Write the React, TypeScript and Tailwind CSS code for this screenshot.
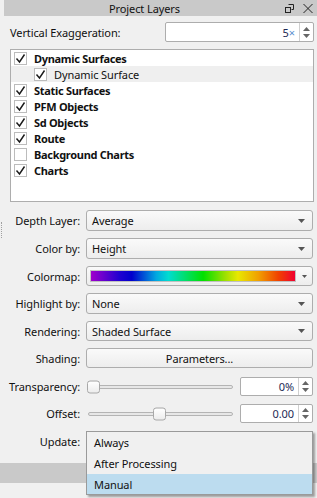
import type { ReactNode } from "react";

const LAYERS = [
  { label: "Dynamic Surfaces", checked: true, level: 0 },
  { label: "Dynamic Surface", checked: true, level: 1 },
  { label: "Static Surfaces", checked: true, level: 0 },
  { label: "PFM Objects", checked: true, level: 0 },
  { label: "Sd Objects", checked: true, level: 0 },
  { label: "Route", checked: true, level: 0 },
  { label: "Background Charts", checked: false, level: 0 },
  { label: "Charts", checked: true, level: 0 },
];

function DownArrow({ small }: { small?: boolean }) {
  return small ? (
    <svg width="5" height="3" viewBox="0 0 5 3">
      <path d="M0 0h5L2.5 3z" fill="#555" />
    </svg>
  ) : (
    <svg width="7" height="4" viewBox="0 0 7 4">
      <path d="M0 0h7L3.5 4z" fill="#555" />
    </svg>
  );
}

function CheckBox({ checked }: { checked: boolean }) {
  return (
    <div className="flex h-[13px] w-[13px] shrink-0 items-center justify-center border border-[#bcbcbc] bg-white">
      {checked && (
        <svg width="11" height="11" viewBox="0 0 11 11">
          <path d="M1.5 5.5L4.5 9L9.5 1.5" fill="none" stroke="#1a1a1a" strokeWidth="1.4" />
        </svg>
      )}
    </div>
  );
}

function Combo({ value }: { value: string }) {
  return (
    <div className="flex h-full flex-1 items-center justify-between rounded-[3px] border border-[#adadad] bg-[linear-gradient(#fafafa,#ededed)] pl-[5px] pr-[7px]">
      <span>{value}</span>
      <DownArrow />
    </div>
  );
}

function Spin({ value, suffix }: { value: string; suffix?: string }) {
  return (
    <div className="flex h-full items-stretch rounded-[2px] border border-[#adadad] bg-white">
      <div className="flex flex-1 items-center justify-end pr-[4px] text-[#1d2a55]">
        {value}
        {suffix && <span className="text-[#5b8fd0]">{suffix}</span>}
      </div>
      <div className="flex w-[14px] flex-col items-center justify-center gap-[3px] border-l border-[#d0d0d0]">
        <svg width="7" height="4" viewBox="0 0 7 4">
          <path d="M0 4h7L3.5 0z" fill="#666" />
        </svg>
        <svg width="7" height="4" viewBox="0 0 7 4">
          <path d="M0 0h7L3.5 4z" fill="#666" />
        </svg>
      </div>
    </div>
  );
}

function Slider({ pos }: { pos: number }) {
  return (
    <div className="relative h-full flex-1">
      <div className="absolute left-[2px] right-0 top-1/2 h-[4px] -translate-y-1/2 rounded-[2px] border border-[#b4b4b4] bg-[#e7e7e7]" />
      <div
        className="absolute top-1/2 h-[13px] w-[13px] -translate-y-1/2 rounded-[3px] border border-[#a8a8a8] bg-[linear-gradient(#ffffff,#ececec)]"
        style={{ left: `calc(${pos} * (100% - 15px) + 1px)` }}
      />
    </div>
  );
}

function Row({
  label,
  h,
  mt,
  children,
  grip,
}: {
  label: string;
  h: string;
  mt: string;
  children: ReactNode;
  grip?: boolean;
}) {
  return (
    <div className={`flex items-center ${h} ${mt}`}>
      <div className="relative flex h-full w-[80px] shrink-0 items-center justify-end">
        {grip && (
          <div className="absolute left-[1px] top-[12px] h-[16px] border-l border-dotted border-[#a0a0a0]" />
        )}
        {label}
      </div>
      <div className="ml-[6px] flex h-full flex-1 items-center gap-[7px]">{children}</div>
    </div>
  );
}

export default function App() {
  return (
    <div className="h-[498px] w-[317px] overflow-hidden bg-[#f0f0f0] font-['Noto_Sans',sans-serif] text-[11px] leading-none tracking-[-0.1px] text-[#111]">
      <div className="ml-[4px] flex h-[16px] items-center bg-[#c9c9c9]">
        <div className="flex-1 text-center">Project Layers</div>
        <div className="flex items-center gap-[9px] pr-[4px]">
          <svg width="9" height="9" viewBox="0 0 9 9">
            <path d="M3.5 0.5h5v5h-2" fill="none" stroke="#222" />
            <rect x="0.5" y="3.5" width="5" height="5" fill="none" stroke="#222" />
          </svg>
          <svg width="10" height="9" viewBox="0 0 10 9">
            <path d="M0.5 0L9.5 9M9.5 0L0.5 9" stroke="#222" strokeWidth="1" />
          </svg>
        </div>
      </div>

      <div className="mt-[6px] flex h-[20px] items-center pl-[10px] pr-[3px]">
        <span className="flex-1">Vertical Exaggeration:</span>
        <div className="h-full w-[149px]">
          <Spin value="5" suffix="×" />
        </div>
      </div>

      <div className="ml-[10px] mr-[3px] mt-[7px] h-[153px] border border-[#adadad] bg-white">
        {LAYERS.map((l) => (
          <div
            key={l.label}
            className={`flex h-[16px] items-center ${l.level === 1 ? "bg-[#efefef] pl-[23px]" : "pl-[3px] font-bold tracking-[-0.3px]"}`}
          >
            <CheckBox checked={l.checked} />
            <span className="ml-[7px]">{l.label}</span>
          </div>
        ))}
      </div>

      <div className="pr-[4px]">
        <Row label="Depth Layer:" h="h-[21px]" mt="mt-[8px]" grip>
          <Combo value="Average" />
        </Row>
        <Row label="Color by:" h="h-[21px]" mt="mt-[7px]">
          <Combo value="Height" />
        </Row>
        <Row label="Colormap:" h="h-[20px]" mt="mt-[7px]">
          <div className="flex h-full flex-1 items-center rounded-[3px] border border-[#adadad] bg-[linear-gradient(#fafafa,#ededed)] pl-[3px] pr-[5px]">
            <div className="h-[12px] flex-1 border border-[#c0c0c0] bg-[linear-gradient(to_right,#a000cc_0%,#2000d0_14%,#0000cc_20%,#00a8e0_32%,#00dcd0_38%,#00e000_55%,#a0e000_66%,#e8e800_72%,#f0a000_82%,#f04000_92%,#f00030_100%)]" />
            <div className="ml-[6px]">
              <DownArrow small />
            </div>
          </div>
        </Row>
        <Row label="Highlight by:" h="h-[21px]" mt="mt-[7px]">
          <Combo value="None" />
        </Row>
        <Row label="Rendering:" h="h-[20px]" mt="mt-[7px]">
          <Combo value="Shaded Surface" />
        </Row>
        <Row label="Shading:" h="h-[20px]" mt="mt-[7px]">
          <div className="flex h-full flex-1 items-center justify-center rounded-[3px] border border-[#adadad] bg-[linear-gradient(#fafafa,#ededed)]">
            Parameters...
          </div>
        </Row>
        <Row label="Transparency:" h="h-[19px]" mt="mt-[9px]">
          <Slider pos={0} />
          <div className="h-full w-[73px]">
            <Spin value="0%" />
          </div>
        </Row>
        <Row label="Offset:" h="h-[19px]" mt="mt-[8px]">
          <Slider pos={0.5} />
          <div className="h-full w-[73px]">
            <Spin value="0.00" />
          </div>
        </Row>
        <Row label="Update:" h="h-[21px]" mt="mt-[8px]">
          <div className="relative h-full flex-1">
            <div className="absolute left-0 right-0 top-0 z-10 flex h-[64px] flex-col border border-[#9a9a9a] bg-[#f0f0f0] shadow-[2px_2px_2px_rgba(0,0,0,0.35)]">
              <div className="flex h-[21px] items-center pl-[7px]">Always</div>
              <div className="flex h-[21px] items-center pl-[7px]">After Processing</div>
              <div className="flex h-[20px] items-center bg-[#bcdcef] pl-[7px]">Manual</div>
            </div>
          </div>
        </Row>
      </div>
      <div className="mt-[11px] h-[20px] bg-[#c9c9c9]" />
    </div>
  );
}
